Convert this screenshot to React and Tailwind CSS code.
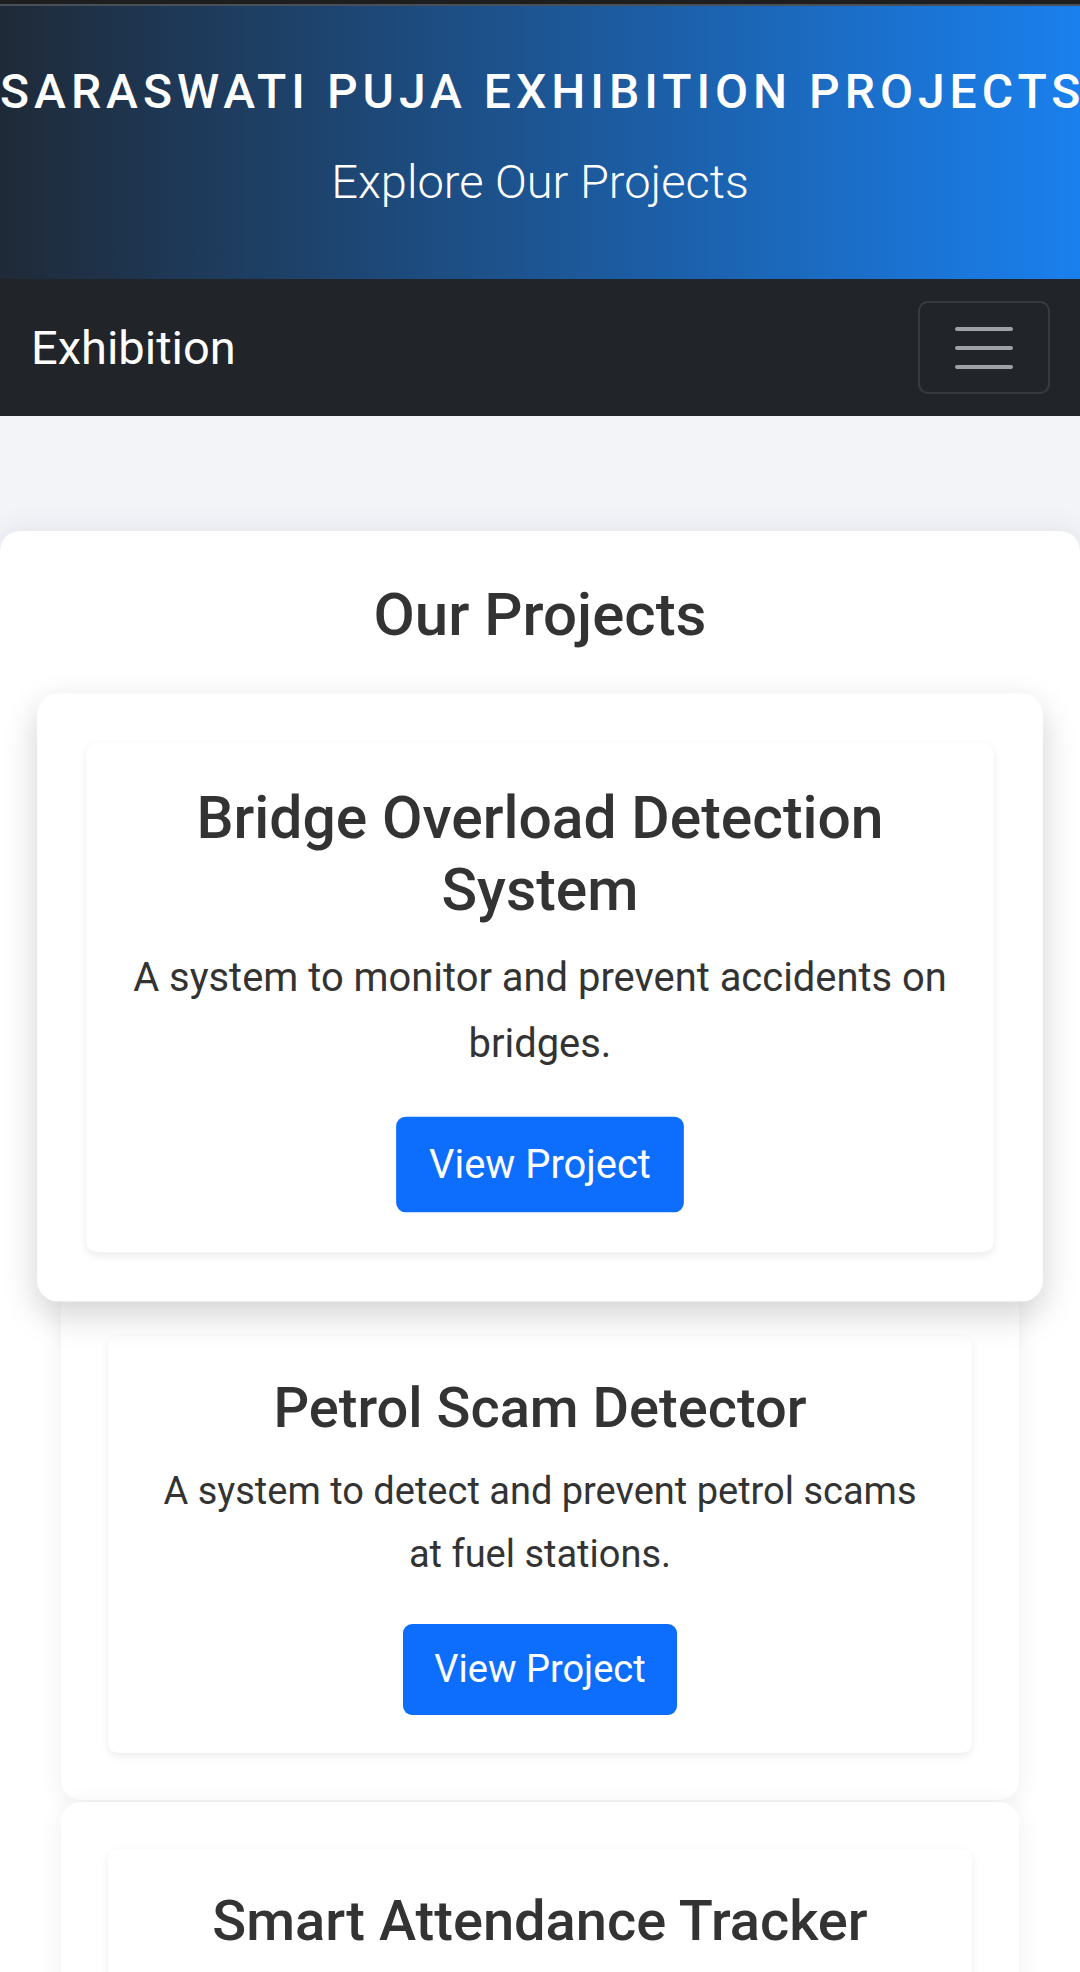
const projects = [
  {
    title: 'Bridge Overload Detection System',
    text: 'A system to monitor and prevent accidents on bridges.',
    active: true
  },
  {
    title: 'Petrol Scam Detector',
    text: 'A system to detect and prevent petrol scams at fuel stations.'
  },
  {
    title: 'Smart Attendance Tracker',
    text: 'A system to track attendance automatically using smart cards.'
  }
];

function ProjectCard({ project }) {
  const outer = project.active
    ? 'relative z-10 scale-105 bg-white rounded-[20px] p-[47px] shadow-[0_12px_32px_rgba(0,0,0,0.18)]'
    : 'bg-white rounded-[20px] p-[47px] shadow-[0_4px_24px_rgba(0,0,0,0.07)]';

  return (
    <div className={outer}>
      <div className="bg-white rounded-[10px] px-[36px] py-[38px] text-center shadow-[0_3px_8px_rgba(0,0,0,0.08)]">
        <h3 className="mb-[18px] text-[56px] font-medium leading-[68px] text-[#333]">{project.title}</h3>
        <p className="mb-[38px] text-[38px] leading-[63px] text-[#333]">{project.text}</p>
        <a
          href="#"
          className="inline-block rounded-[9px] bg-[#0d6efd] px-[31px] py-[23px] text-[38px] leading-[45px] text-white"
        >
          View Project
        </a>
      </div>
    </div>
  );
}

export default function App() {
  return (
    <div className="min-h-screen bg-[#f3f4f8] font-['Roboto',sans-serif]">
      <div className="h-[4px] bg-[#1e1e1e]" />
      <div className="h-[2px] bg-[#4a5058]" />

      <header className="bg-[linear-gradient(to_right,#1f2a38,#1a80ee)] pb-[62px] pt-[57px] text-center text-white">
        <h1 className="whitespace-nowrap text-[48px] font-medium uppercase leading-[57.6px] tracking-[5px]">
          Saraswati Puja Exhibition Projects
        </h1>
        <p className="mt-[26px] text-[47px] font-light leading-[70.5px]">Explore Our Projects</p>
      </header>

      <nav className="flex h-[137px] items-center justify-between bg-[#212529] pl-[31px] pr-[30px]">
        <a href="#" className="text-[47px] leading-[56px] text-white">
          Exhibition
        </a>
        <button className="flex h-[93px] w-[132px] flex-col items-center justify-center gap-[15px] rounded-[10px] border-2 border-white/10">
          <span className="h-[4px] w-[58px] rounded-full bg-[#9fa1a4]" />
          <span className="h-[4px] w-[58px] rounded-full bg-[#9fa1a4]" />
          <span className="h-[4px] w-[58px] rounded-full bg-[#9fa1a4]" />
        </button>
      </nav>

      <main className="pt-[115px]">
        <section className="rounded-[20px] bg-white px-[61px] pb-[60px] pt-[48px] shadow-[0_0_30px_rgba(40,60,90,0.1)]">
          <h2 className="text-center text-[60px] font-medium leading-[72px] text-[#333]">Our Projects</h2>
          <div className="mt-[57px] flex flex-col gap-[2px]">
            {projects.map((project) => (
              <ProjectCard key={project.title} project={project} />
            ))}
          </div>
        </section>
      </main>
    </div>
  );
}
